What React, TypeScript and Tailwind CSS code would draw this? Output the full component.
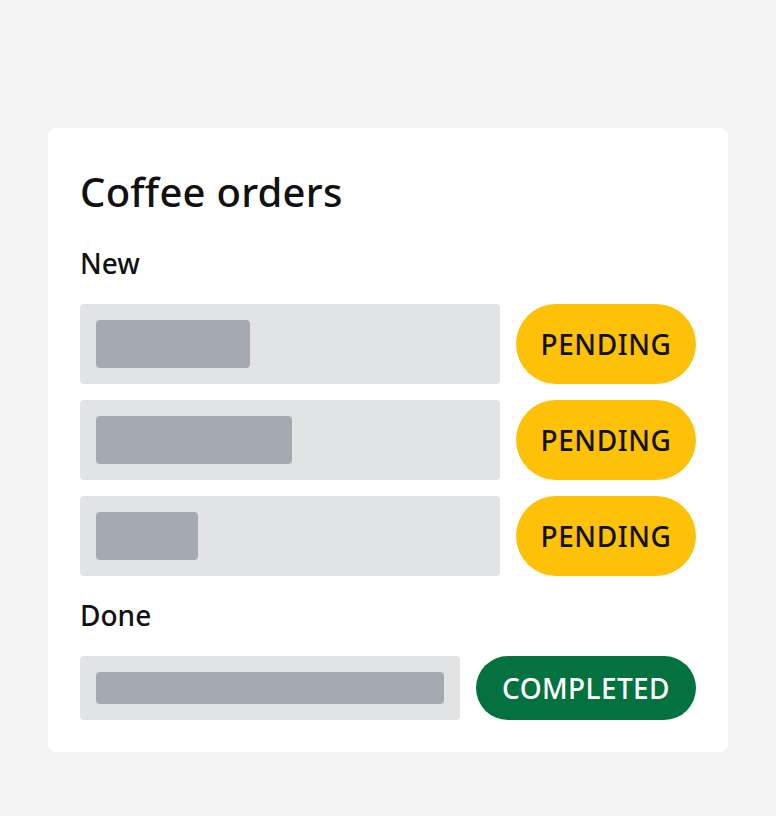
import React from "react";

interface Order {
  id: number;
  barWidth: string;
  status: "pending" | "completed";
}

const newOrders: Order[] = [
  { id: 1, barWidth: "w-[154px]", status: "pending" },
  { id: 2, barWidth: "w-[196px]", status: "pending" },
  { id: 3, barWidth: "w-[102px]", status: "pending" },
];

const StatusPill = ({ status }: { status: Order["status"] }) =>
  status === "pending" ? (
    <div className="flex h-20 w-[180px] shrink-0 items-center justify-center rounded-full bg-[#fdc108] text-[28px] font-medium tracking-[0.6px] text-[#111]">
      PENDING
    </div>
  ) : (
    <div className="flex h-16 w-[220px] shrink-0 items-center justify-center rounded-full bg-[#03723e] text-[28px] font-medium tracking-[0.4px] text-white">
      COMPLETED
    </div>
  );

export default function App() {
  return (
    <div
      className="min-h-[816px] bg-[#f3f3f3] px-12 pt-32"
      style={{ fontFamily: '"Noto Sans", "Open Sans", sans-serif' }}
    >
      <div className="w-[680px] rounded-lg bg-white p-8 text-[#111]">
        <h1 className="text-[40px] font-medium leading-[64px] tracking-[0.25px]">Coffee orders</h1>

        <h2 className="mt-[19px] mb-[21px] text-[28px] font-medium leading-[40px]">New</h2>
        <div className="flex flex-col gap-4">
          {newOrders.map((o) => (
            <div key={o.id} className="flex gap-4">
              <div className="flex h-20 w-[420px] items-center rounded bg-[#e2e3e5] px-4">
                <div className={`h-12 rounded bg-[#a5aab2] ${o.barWidth}`} />
              </div>
              <StatusPill status={o.status} />
            </div>
          ))}
        </div>

        <h2 className="mt-[19px] mb-[21px] text-[28px] font-medium leading-[40px]">Done</h2>
        <div className="flex gap-4">
          <div className="flex h-16 w-[380px] items-center rounded bg-[#e2e3e5] px-4">
            <div className="h-8 w-full rounded bg-[#a5aab2]" />
          </div>
          <StatusPill status="completed" />
        </div>
      </div>
    </div>
  );
}
